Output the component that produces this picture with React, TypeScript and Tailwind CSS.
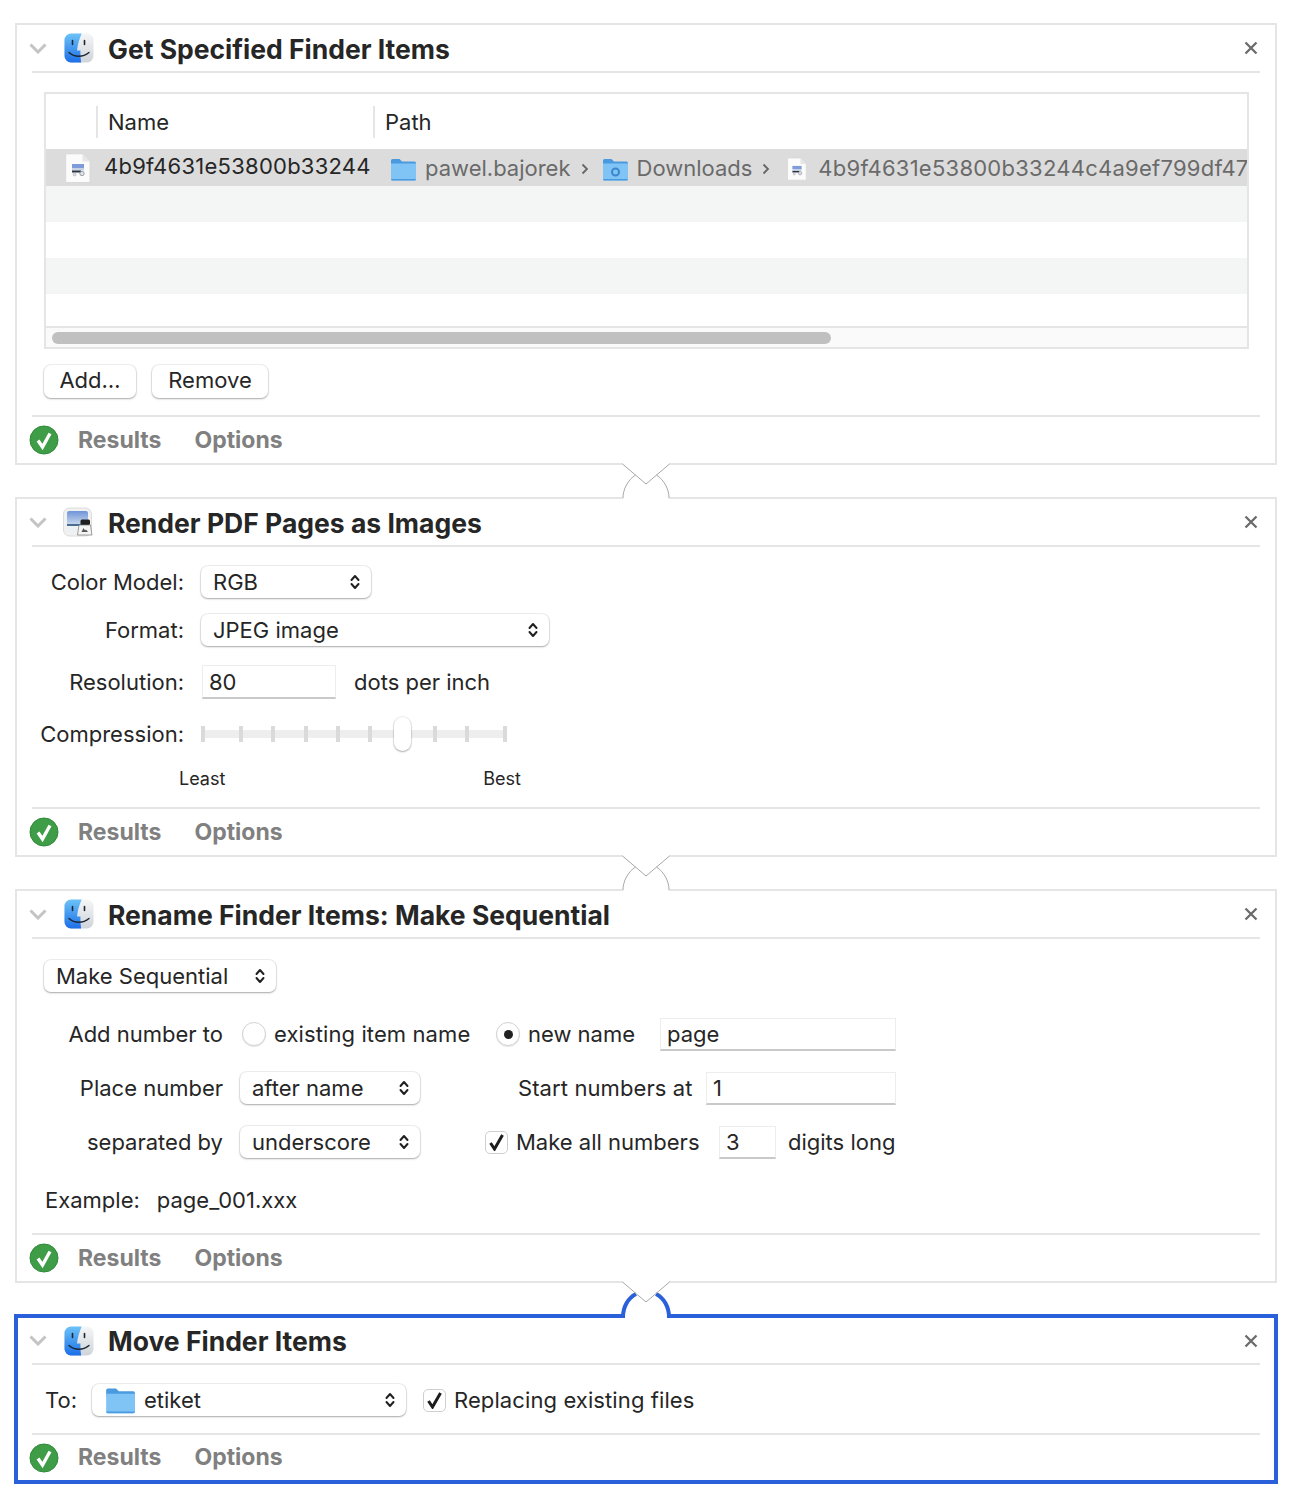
import React from 'react';

const textColor = 'text-[#262626]';

function FinderIcon() {
  return (
    <svg width="32" height="32" viewBox="0 0 32 32" className="shrink-0">
      <defs>
        <linearGradient id="fb" x1="0" y1="0" x2="0" y2="1">
          <stop offset="0" stopColor="#6cc3f7" />
          <stop offset="1" stopColor="#1c6fe8" />
        </linearGradient>
        <linearGradient id="fg" x1="0" y1="0" x2="0" y2="1">
          <stop offset="0" stopColor="#f5f6f7" />
          <stop offset="1" stopColor="#cfd4da" />
        </linearGradient>
      </defs>
      <rect x="1.500" y="1.500" width="29" height="29" rx="6.500" fill="url(#fg)" />
      <path d="M8 1.500h10.600C16.400 7 14.600 12.600 14 18.400h3.400c-.1 4 .1 8 .7 12.100H8a6.500 6.500 0 0 1-6.500-6.500V8A6.500 6.500 0 0 1 8 1.500z" fill="url(#fb)" />
      <path d="M9.500 8.500v4M21.500 8.500v4" stroke="#1d2733" strokeWidth="1.600" strokeLinecap="round" />
      <path d="M6 20.500c5.500 5 14 5 20 0" fill="none" stroke="#1d2733" strokeWidth="1.400" strokeLinecap="round" />
    </svg>
  );
}

function PreviewIcon() {
  return (
    <svg width="32" height="32" viewBox="0 0 32 32" className="shrink-0 ml-[-1px] mr-[1px]">
      <defs>
        <linearGradient id="pv" x1="0" y1="0" x2="0" y2="1">
          <stop offset="0" stopColor="#6f94d8" />
          <stop offset="0.58" stopColor="#c3d4ec" />
          <stop offset="0.59" stopColor="#4a6c90" />
          <stop offset="0.66" stopColor="#4a6c90" />
          <stop offset="0.67" stopColor="#eef1f3" />
        </linearGradient>
      </defs>
      <rect x="1.500" y="2" width="28" height="28" rx="6" fill="#f1f1f1" stroke="#dcdcdc" />
      <rect x="5" y="5" width="21" height="22" rx="2" fill="url(#pv)" />
      <rect x="18.500" y="13.500" width="9.500" height="5.500" rx="1.500" fill="#1f1f1f" />
      <path d="M17 19h11.500l1.500 10H15.500z" fill="#f4f4f4" stroke="#777" strokeWidth="0.700" />
      <path d="M19.500 26l2-4 1.500 2.500 1-1 2 2.500z" fill="#555" />
    </svg>
  );
}

function FileIcon({ w = 26, h = 30 }: { w?: number; h?: number }) {
  return (
    <svg width={w} height={h} viewBox="0 0 26 30" className="shrink-0">
      <path d="M1.500.8h16l7.500 7.700v20.200a.8.800 0 0 1-.8.8H1.500a.8.800 0 0 1-.8-.8V1.600a.8.800 0 0 1 .8-.8z" fill="#fbfbfb" stroke="#d4d4d4" strokeWidth="0.800" />
      <path d="M17.500.8v7.700h7.500z" fill="#e6e6e6" />
      <rect x="7" y="11" width="12" height="4" fill="#7f9bdc" />
      <rect x="7" y="15" width="12" height="2.500" fill="#c7d2e4" />
      <rect x="7" y="17.500" width="9" height="2" fill="#2a3440" />
      <circle cx="17" cy="20.500" r="2.200" fill="#dfe3e8" stroke="#7b838c" strokeWidth="0.700" />
      <circle cx="9.500" cy="21.500" r="1.400" fill="#e4e7ea" stroke="#98a0a8" strokeWidth="0.600" />
    </svg>
  );
}

function FolderIcon({ w = 26, h = 24, badge = false }: { w?: number; h?: number; badge?: boolean }) {
  return (
    <svg width={w} height={h} viewBox="0 0 26 24" className="shrink-0">
      <path d="M1 3.500A1.500 1.500 0 0 1 2.500 2h7l2.500 2.500h12.500A1.500 1.500 0 0 1 26 6v3H1z" fill="#4a9ae0" />
      <path d="M1 6.500h25v15.500a1.500 1.500 0 0 1-1.500 1.500h-22A1.500 1.500 0 0 1 1 22z" fill="#7fc4f5" />
      <path d="M1 22h25a1.500 1.500 0 0 1-1.500 1.500h-22A1.500 1.500 0 0 1 1 22z" fill="#4a9ae0" />
      {badge && <circle cx="13.500" cy="15" r="3.500" fill="none" stroke="#3a86cc" strokeWidth="2" />}
    </svg>
  );
}

function Updown() {
  return (
    <svg width="10" height="16" viewBox="0 0 10 16" className="shrink-0">
      <path d="M1.500 6l3.500-4 3.500 4M1.500 10l3.500 4 3.500-4" fill="none" stroke="#222" strokeWidth="2" strokeLinecap="round" strokeLinejoin="round" />
    </svg>
  );
}

function Crumb() {
  return (
    <svg width="8" height="12" viewBox="0 0 8 12" className="shrink-0">
      <path d="M1.500 1.500 6 6l-4.500 4.500" fill="none" stroke="#666" strokeWidth="1.800" />
    </svg>
  );
}

function Select({ width, label, icon }: { width: string; label: string; icon?: React.ReactNode }) {
  return (
    <div className={`${width} h-[32px] flex items-center justify-between pl-[12px] pr-[11px] rounded-[7px] bg-white shadow-[0_1px_2px_rgba(0,0,0,0.3),0_0_0_1px_rgba(0,0,0,0.06)] shrink-0`}>
      <div className="flex items-center">
        {icon}
        <span>{label}</span>
      </div>
      <Updown />
    </div>
  );
}

function Input({ width, value, height = 'h-[33px]' }: { width: string; value: string; height?: string }) {
  return (
    <div className={`${width} ${height} flex items-center pl-[6px] pt-[2px] bg-white border border-[#ededed] border-b-2 border-b-[#c9c9c9] shrink-0`}>
      {value}
    </div>
  );
}

function Radio({ on = false }: { on?: boolean }) {
  return (
    <div className="w-[24px] h-[24px] rounded-full bg-white border border-[#d2d2d2] shadow-[0_1px_1px_rgba(0,0,0,0.1)] flex items-center justify-center shrink-0">
      {on && <div className="w-[9px] h-[9px] rounded-full bg-[#222]" />}
    </div>
  );
}

function Checkbox() {
  return (
    <div className="w-[23px] h-[23px] rounded-[5px] bg-white border border-[#cfcfcf] flex items-center justify-center shrink-0">
      <svg width="17" height="18" viewBox="0 0 17 18">
        <path d="M2.500 10l4 6L14.500 2" fill="none" stroke="#1c1c1c" strokeWidth="3" />
      </svg>
    </div>
  );
}

function Tick() {
  return <div className="relative w-[4px] h-[16px] bg-[#dadada]" />;
}

function Panel({ icon, title, active = false, children }: { icon: React.ReactNode; title: string; active?: boolean; children: React.ReactNode }) {
  const inset = active ? 'mx-[14px] h-[47px]' : 'mx-[15px] h-[48px]';
  return (
    <div className={active ? 'border-4 border-[#2a60d9] bg-white -mx-px' : 'border-2 border-[#e5e5e5] bg-white'}>
      <div className={`${inset} flex items-center border-b-2 border-[#e5e5e5]`}>
        <svg width="18" height="11" viewBox="0 0 18 11" className="ml-[-3px] mr-[16px] shrink-0">
          <path d="M1.500 1.500 9 9l7.500-7.500" fill="none" stroke="#c4c4c4" strokeWidth="3" />
        </svg>
        {icon}
        <span className={`ml-[13px] ${active ? 'mt-[2px]' : 'mt-[4px]'} text-[26.500px] font-bold text-[#262626]`}>{title}</span>
        <svg width="14" height="14" viewBox="0 0 14 14" className="ml-auto mr-[2px] shrink-0">
          <path d="M1.500 1.500l11 11M12.500 1.500l-11 11" stroke="#6b6b6b" strokeWidth="2.300" />
        </svg>
      </div>
      {children}
      <div className={`${inset} flex items-center border-t-2 border-[#e5e5e5] text-[23px] font-bold text-[#808080]`}>
        <svg width="30" height="30" viewBox="0 0 30 30" className="ml-[-3px] shrink-0">
          <circle cx="15" cy="15" r="14" fill="#3f9c47" stroke="#2f8a39" />
          <path d="M9 15.500l4.500 6.500L21 8.500" fill="none" stroke="#fff" strokeWidth="3.400" />
        </svg>
        <span className="ml-[19px]">Results</span>
        <span className="ml-[33px]">Options</span>
      </div>
    </div>
  );
}

function Connector() {
  return (
    <div className="h-[32px] relative">
      <svg width="60" height="36" viewBox="0 0 60 36" className="absolute left-[601px] top-[-2px]">
        <rect x="7" y="0" width="46" height="2" fill="#fff" />
        <rect x="7" y="34" width="46" height="2" fill="#fff" />
        <path d="M6.500 1 30 21 53.500 1" fill="none" stroke="#a8a8a8" strokeWidth="1" />
        <path d="M7 35C7 26 12 17 19.500 12M53 35C53 26 48 17 40.500 12" fill="none" stroke="#a8a8a8" strokeWidth="1" />
      </svg>
    </div>
  );
}

function BlueConnector() {
  return (
    <div className="h-[31px] relative">
      <svg width="60" height="37" viewBox="0 0 60 37" className="absolute left-[601px] top-[-2px]">
        <rect x="7" y="0" width="46" height="2" fill="#fff" />
        <rect x="9" y="33" width="42" height="4" fill="#fff" />
        <path d="M7 36C7 26 12 17 20 13M53 36C53 26 48 17 40 13" fill="none" stroke="#2a60d9" strokeWidth="4" />
        <path d="M6.500 1 30 21 53.500 1" fill="none" stroke="#a8a8a8" strokeWidth="1" />
      </svg>
    </div>
  );
}

function TableRow({ bg, height, children }: { bg: string; height: string; children?: React.ReactNode }) {
  return <div className={`${bg} ${height} flex items-center overflow-hidden whitespace-nowrap`}>{children}</div>;
}

export default function App() {
  return (
    <div className={`w-[1293px] h-[1506px] bg-white pl-[15px] pr-[16px] pt-[23px] font-['Inter',sans-serif] text-[22px] ${textColor} overflow-hidden`}>
      <Panel icon={<FinderIcon />} title="Get Specified Finder Items">
        <div className="h-[342px] pt-[19px] pl-[27px] pr-[26px]">
          <div className="border-2 border-[#e5e5e5] h-[257px]">
            <div className="h-[55px] flex items-center">
              <div className="w-[52px] h-[32px] border-r-2 border-[#e5e5e5] shrink-0" />
              <div className="w-[277px] h-[32px] border-r-2 border-[#e5e5e5] pl-[10px] pt-[2px] flex items-center shrink-0">Name</div>
              <div className="pl-[10px] pt-[2px]">Path</div>
            </div>
            <TableRow bg="bg-[#dcdcdc]" height="h-[37px]">
              <div className="ml-[19px]"><FileIcon /></div>
              <span className="ml-[13px] w-[286px] shrink-0 -mt-[3px] tracking-[0.25px]">4b9f4631e53800b33244</span>
              <div className="flex items-center text-[#6a6a6a] mt-[2px]">
                <FolderIcon />
                <span className="ml-[9px]">pawel.bajorek</span>
                <span className="ml-[10px]"><Crumb /></span>
                <span className="ml-[13px]"><FolderIcon badge /></span>
                <span className="ml-[9px]">Downloads</span>
                <span className="ml-[10px]"><Crumb /></span>
                <span className="ml-[17px]"><FileIcon w={20} h={26} /></span>
                <span className="ml-[11px] tracking-[0.25px]">4b9f4631e53800b33244c4a9ef799df47</span>
              </div>
            </TableRow>
            <TableRow bg="bg-[#f4f5f5]" height="h-[36px]" />
            <TableRow bg="bg-white" height="h-[36px]" />
            <TableRow bg="bg-[#f4f5f5]" height="h-[36px]" />
            <TableRow bg="bg-white" height="h-[32px]" />
            <div className="h-[21px] border-t-2 border-[#e5e5e5] bg-[#fafafa] pt-[4px] pl-[6px]">
              <div className="w-[779px] h-[12px] rounded-full bg-[#c0c0c0]" />
            </div>
          </div>
          <div className="flex gap-[16px] mt-[16px]">
            <div className="w-[92px] h-[33px] pb-[2px] flex items-center justify-center rounded-[7px] bg-white shadow-[0_1px_2px_rgba(0,0,0,0.3),0_0_0_1px_rgba(0,0,0,0.06)]">Add…</div>
            <div className="w-[116px] h-[33px] pb-[2px] flex items-center justify-center rounded-[7px] bg-white shadow-[0_1px_2px_rgba(0,0,0,0.3),0_0_0_1px_rgba(0,0,0,0.06)]">Remove</div>
          </div>
        </div>
      </Panel>

      <Connector />

      <Panel icon={<PreviewIcon />} title="Render PDF Pages as Images">
        <div className="h-[260px] pt-[19px] flex flex-col">
          <div className="flex items-center h-[32px]">
            <div className="w-[167px] text-right">Color Model:</div>
            <div className="ml-[17px]"><Select width="w-[170px]" label="RGB" /></div>
          </div>
          <div className="flex items-center h-[32px] mt-[16px]">
            <div className="w-[167px] text-right">Format:</div>
            <div className="ml-[17px]"><Select width="w-[348px]" label="JPEG image" /></div>
          </div>
          <div className="flex items-center h-[34px] mt-[19px]">
            <div className="w-[167px] text-right">Resolution:</div>
            <div className="ml-[18px]"><Input width="w-[134px]" value="80" height="h-[34px]" /></div>
            <div className="ml-[18px]">dots per inch</div>
          </div>
          <div className="flex items-center h-[34px] mt-[18px]">
            <div className="w-[167px] text-right">Compression:</div>
            <div className="ml-[17px] relative w-[306px] h-[20px] flex items-center justify-between">
              <div className="absolute left-0 right-0 top-[6px] h-[8px] bg-[#eeeeee]" />
              <Tick />
              <div className="relative w-[230px] flex items-center justify-between">
                <Tick />
                <Tick />
                <Tick />
                <Tick />
                <Tick />
                <div className="w-[4px]" />
                <Tick />
                <Tick />
              </div>
              <Tick />
              <div className="absolute left-[193px] top-[-7px] w-[17px] h-[34px] rounded-full bg-white shadow-[0_1px_2px_rgba(0,0,0,0.3),0_0_0_1px_rgba(0,0,0,0.06)]" />
            </div>
          </div>
          <div className="flex items-center text-[18px] mt-[14px] ml-[162px] w-[342px] justify-between">
            <span>Least</span>
            <span>Best</span>
          </div>
        </div>
      </Panel>

      <Connector />

      <Panel icon={<FinderIcon />} title="Rename Finder Items: Make Sequential">
        <div className="h-[294px] pt-[21px]">
          <div className="ml-[27px]"><Select width="w-[232px]" label="Make Sequential" /></div>
          <div className="flex items-center h-[34px] mt-[25px]">
            <div className="w-[206px] text-right shrink-0">Add number to</div>
            <div className="ml-[19px]"><Radio /></div>
            <span className="ml-[8px] w-[222px] shrink-0 tracking-[0.1px]">existing item name</span>
            <Radio on />
            <span className="ml-[8px] w-[132px] shrink-0">new name</span>
            <Input width="w-[236px]" value="page" />
          </div>
          <div className="flex items-center h-[34px] mt-[20px]">
            <div className="w-[206px] text-right shrink-0">Place number</div>
            <div className="ml-[17px]"><Select width="w-[180px]" label="after name" /></div>
            <span className="ml-[98px] w-[188px] shrink-0 tracking-[0.1px]">Start numbers at</span>
            <Input width="w-[190px]" value="1" />
          </div>
          <div className="flex items-center h-[34px] mt-[20px]">
            <div className="w-[206px] text-right shrink-0">separated by</div>
            <div className="ml-[17px]"><Select width="w-[180px]" label="underscore" /></div>
            <div className="ml-[65px]"><Checkbox /></div>
            <span className="ml-[8px] w-[203px] shrink-0">Make all numbers</span>
            <Input width="w-[57px]" value="3" />
            <span className="ml-[12px]">digits long</span>
          </div>
          <div className="flex items-center h-[34px] mt-[24px] pl-[28px]">
            <span>Example:</span>
            <span className="ml-[17px]">page_001.xxx</span>
          </div>
        </div>
      </Panel>

      <BlueConnector />

      <Panel active icon={<FinderIcon />} title="Move Finder Items">
        <div className="h-[68px] pt-[2px] flex items-center">
          <span className="ml-[27px] w-[47px] shrink-0">To:</span>
          <Select width="w-[314px]" label="etiket" icon={<span className="ml-[1px] mr-[9px]"><FolderIcon w={30} h={28} /></span>} />
          <div className="ml-[17px]"><Checkbox /></div>
          <span className="ml-[8px] tracking-[0.1px]">Replacing existing files</span>
        </div>
      </Panel>
    </div>
  );
}
